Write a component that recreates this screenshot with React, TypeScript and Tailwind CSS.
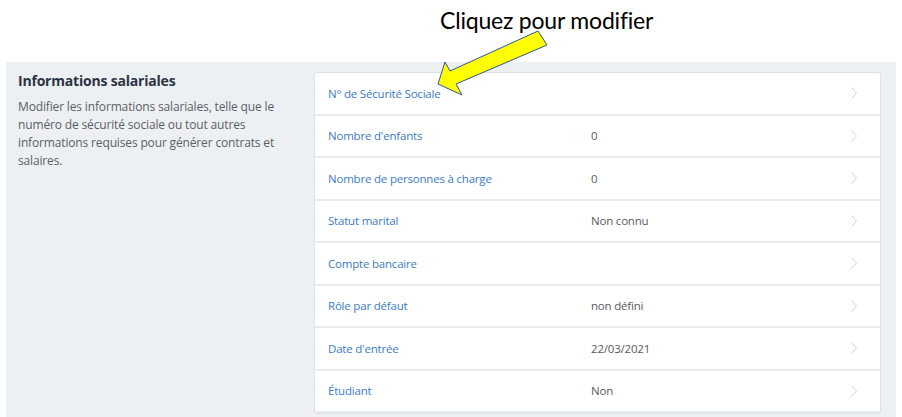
import React from "react";

const rows: { label: string; value: string }[] = [
  { label: "N° de Sécurité Sociale", value: "" },
  { label: "Nombre d'enfants", value: "0" },
  { label: "Nombre de personnes à charge", value: "0" },
  { label: "Statut marital", value: "Non connu" },
  { label: "Compte bancaire", value: "" },
  { label: "Rôle par défaut", value: "non défini" },
  { label: "Date d'entrée", value: "22/03/2021" },
  { label: "Étudiant", value: "Non" },
];

function Chevron() {
  return (
    <svg width="8" height="14" viewBox="0 0 8 14" className="shrink-0">
      <path d="M1.5 1.5 L6.5 7 L1.5 12.5" fill="none" stroke="#cdd1d6" strokeWidth="1" />
    </svg>
  );
}

export default function App() {
  return (
    <div className="relative w-[902px] h-[417px] overflow-hidden bg-white font-['Open_Sans',sans-serif]">
      {/* Annotation */}
      <div className="h-[62px] pl-[440px] pt-[3px]">
        <span className="text-[23px] text-black font-['Lato',sans-serif] tracking-[-0.2px]">
          Cliquez pour modifier
        </span>
      </div>

      <div className="ml-[6px] w-[890px] h-[355px] bg-[#edf0f3] flex">
        {/* Left description */}
        <div className="w-[308px] pl-[12px] pr-[20px] pt-[9px]">
          <h2 className="text-[14px] font-bold text-[#2b3443] leading-[20px] tracking-[-0.2px]">
            Informations salariales
          </h2>
          <p className="mt-[7px] text-[12px] leading-[18px] text-[#5a5f66] tracking-[-0.15px]">
            Modifier les informations salariales, telle que le numéro de sécurité sociale ou tout autres
            informations requises pour générer contrats et salaires.
          </p>
        </div>

        {/* Card */}
        <div className="mt-[10px] w-[567px] self-start bg-white border border-[#dde1e6] rounded-[3px]">
          {rows.map((row) => (
            <div
              key={row.label}
              className="h-[42.5px] flex items-center border-b-2 border-[#e8ebee] pl-[13px] pr-[22px]"
            >
              <span className="w-[263px] text-[11.5px] text-[#3b7cc4] tracking-[-0.2px]">{row.label}</span>
              <span className="flex-1 text-[11.5px] text-[#58595c] tracking-[-0.2px]">{row.value}</span>
              <Chevron />
            </div>
          ))}
        </div>
      </div>

      {/* Arrow overlay */}
      <svg className="absolute left-0 top-0 pointer-events-none" width="902" height="417">
        <polygon
          points="538,31 547,45 456,84 462,95 438,84 445,62 450,71"
          fill="#ffff00"
          stroke="#2f5597"
          strokeWidth="1"
          strokeLinejoin="miter"
        />
      </svg>
    </div>
  );
}
